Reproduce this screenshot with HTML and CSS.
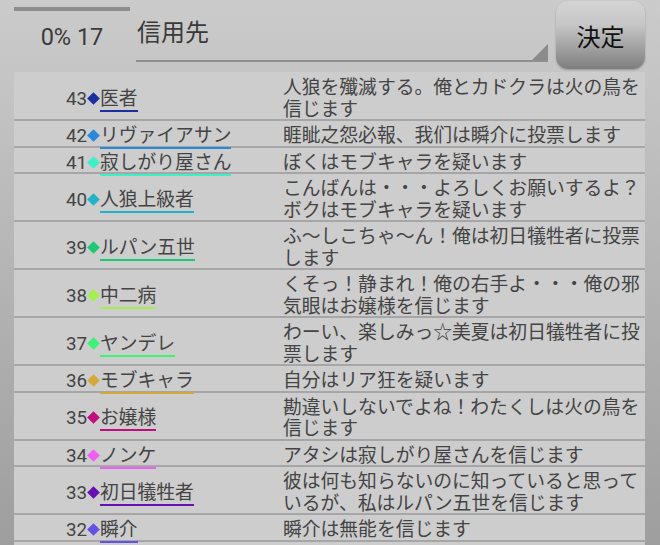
FILE: index.html
```html
<!DOCTYPE html>
<html lang="ja">
<head>
    <meta charset="UTF-8">
    <title>信用先</title>
    <link rel="stylesheet" href="styles.css">
</head>
<body>
    <div class="screen">
        <div class="toolbar">
            <div class="progress">
                <div class="progress-bar"></div>
                <div class="progress-text">0% 17</div>
            </div>
            <div class="spinner">
                <span class="spinner-label">信用先</span>
            </div>
            <button class="decide-btn">決定</button>
        </div>

        <div class="list">
            <div class="row">
                <div class="who"><div class="tag"><span class="num">43</span><span class="mark" style="--c: #1a2fa0"></span><span class="name" style="--c: #1a2fa0">医者</span></div></div>
                <div class="msg">人狼を殲滅する。俺とカドクラは火の鳥を信じます</div>
            </div>
            <div class="row">
                <div class="who"><div class="tag"><span class="num">42</span><span class="mark" style="--c: #2a88d8"></span><span class="name" style="--c: #2a88d8">リヴァイアサン</span></div></div>
                <div class="msg">睚眦之怨必報、我们は瞬介に投票します</div>
            </div>
            <div class="row">
                <div class="who"><div class="tag"><span class="num">41</span><span class="mark" style="--c: #3ef0c8"></span><span class="name" style="--c: #3ef0c8">寂しがり屋さん</span></div></div>
                <div class="msg">ぼくはモブキャラを疑います</div>
            </div>
            <div class="row">
                <div class="who"><div class="tag"><span class="num">40</span><span class="mark" style="--c: #1fb2c8"></span><span class="name" style="--c: #1fb2c8">人狼上級者</span></div></div>
                <div class="msg">こんばんは・・・よろしくお願いするよ？ボクはモブキャラを疑います</div>
            </div>
            <div class="row">
                <div class="who"><div class="tag"><span class="num">39</span><span class="mark" style="--c: #1ec873"></span><span class="name" style="--c: #1ec873">ルパン五世</span></div></div>
                <div class="msg">ふ～しこちゃ～ん！俺は初日犠牲者に投票します</div>
            </div>
            <div class="row">
                <div class="who"><div class="tag"><span class="num">38</span><span class="mark" style="--c: #a2f050"></span><span class="name" style="--c: #a2f050">中二病</span></div></div>
                <div class="msg">くそっ！静まれ！俺の右手よ・・・俺の邪気眼はお嬢様を信じます</div>
            </div>
            <div class="row">
                <div class="who"><div class="tag"><span class="num">37</span><span class="mark" style="--c: #3ef278"></span><span class="name" style="--c: #3ef278">ヤンデレ</span></div></div>
                <div class="msg">わーい、楽しみっ☆美夏は初日犠牲者に投票します</div>
            </div>
            <div class="row">
                <div class="who"><div class="tag"><span class="num">36</span><span class="mark" style="--c: #d6a83a"></span><span class="name" style="--c: #d6a83a">モブキャラ</span></div></div>
                <div class="msg">自分はリア狂を疑います</div>
            </div>
            <div class="row">
                <div class="who"><div class="tag"><span class="num">35</span><span class="mark" style="--c: #c00e7e"></span><span class="name" style="--c: #c00e7e">お嬢様</span></div></div>
                <div class="msg">勘違いしないでよね！わたくしは火の鳥を信じます</div>
            </div>
            <div class="row">
                <div class="who"><div class="tag"><span class="num">34</span><span class="mark" style="--c: #f060f0"></span><span class="name" style="--c: #f060f0">ノンケ</span></div></div>
                <div class="msg">アタシは寂しがり屋さんを信じます</div>
            </div>
            <div class="row">
                <div class="who"><div class="tag"><span class="num">33</span><span class="mark" style="--c: #6510b4"></span><span class="name" style="--c: #6510b4">初日犠牲者</span></div></div>
                <div class="msg">彼は何も知らないのに知っていると思っているが、私はルパン五世を信じます</div>
            </div>
            <div class="row">
                <div class="who"><div class="tag"><span class="num">32</span><span class="mark" style="--c: #6452e6"></span><span class="name" style="--c: #6452e6">瞬介</span></div></div>
                <div class="msg">瞬介は無能を信じます</div>
            </div>
        </div>
    </div>
</body>
</html>
```

FILE: styles.css
```css
* {
    margin: 0;
    padding: 0;
    box-sizing: border-box;
}

body {
    width: 660px;
    height: 545px;
    overflow: hidden;
    font-family: Roboto, "Noto Sans CJK JP", sans-serif;
    background: linear-gradient(#cbcbcb, #9e9e9e);
    color: #444;
}

.screen {
    padding: 0 15px 0 14px;
}

.toolbar {
    display: flex;
    align-items: flex-start;
    height: 72px;
}

.progress {
    width: 116px;
    padding-top: 7px;
}

.progress-bar {
    height: 4px;
    background: #8d8d8d;
}

.progress-text {
    margin-top: 12px;
    text-align: center;
    font-size: 23.5px;
    line-height: 28px;
    color: #3a3a3a;
}

.spinner {
    position: relative;
    flex: 1;
    height: 62px;
    margin: 0 8px 0 6px;
    border-bottom: 2px solid #8e8e8e;
}

.spinner::after {
    content: "";
    position: absolute;
    right: 0;
    bottom: 0;
    border-left: 16px solid transparent;
    border-bottom: 16px solid #8a8a8a;
}

.spinner-label {
    display: block;
    padding: 15px 0 0 1px;
    font-family: "Noto Sans CJK JP", sans-serif;
    font-size: 24px;
    line-height: 32px;
    color: #3a3a3a;
}

.decide-btn {
    width: 89px;
    height: 68px;
    margin-top: 1px;
    border: none;
    border-radius: 12px;
    background: linear-gradient(#d4d4d4, #c6c6c6 35%, #7e7e7e);
    box-shadow: 0 1px 2px rgba(0, 0, 0, 0.25);
    font-family: "Noto Sans CJK JP", sans-serif;
    font-size: 24px;
    color: #111;
}

.list {
    background: #cdcdcd;
    padding: 1px 0 20px;
}

.row {
    display: grid;
    grid-template-columns: 269px 1fr;
    padding: 2px 0 1px;
    border-bottom: 2px solid #a6a6a6;
    font-size: 18.8px;
    line-height: 21.5px;
}

.who {
    display: flex;
    align-items: center;
}

.tag {
    height: 21.5px;
    white-space: nowrap;
}

.num {
    display: inline-block;
    width: 73px;
    text-align: right;
}

.mark {
    display: inline-block;
    width: 9px;
    height: 9px;
    margin: 0 2px;
    vertical-align: 2px;
    background: var(--c);
    transform: rotate(45deg);
}

.name {
    font-family: "Noto Sans CJK JP", sans-serif;
    border-bottom: 2px solid var(--c);
}

.msg {
    font-family: "Noto Sans CJK JP", sans-serif;
}
```
